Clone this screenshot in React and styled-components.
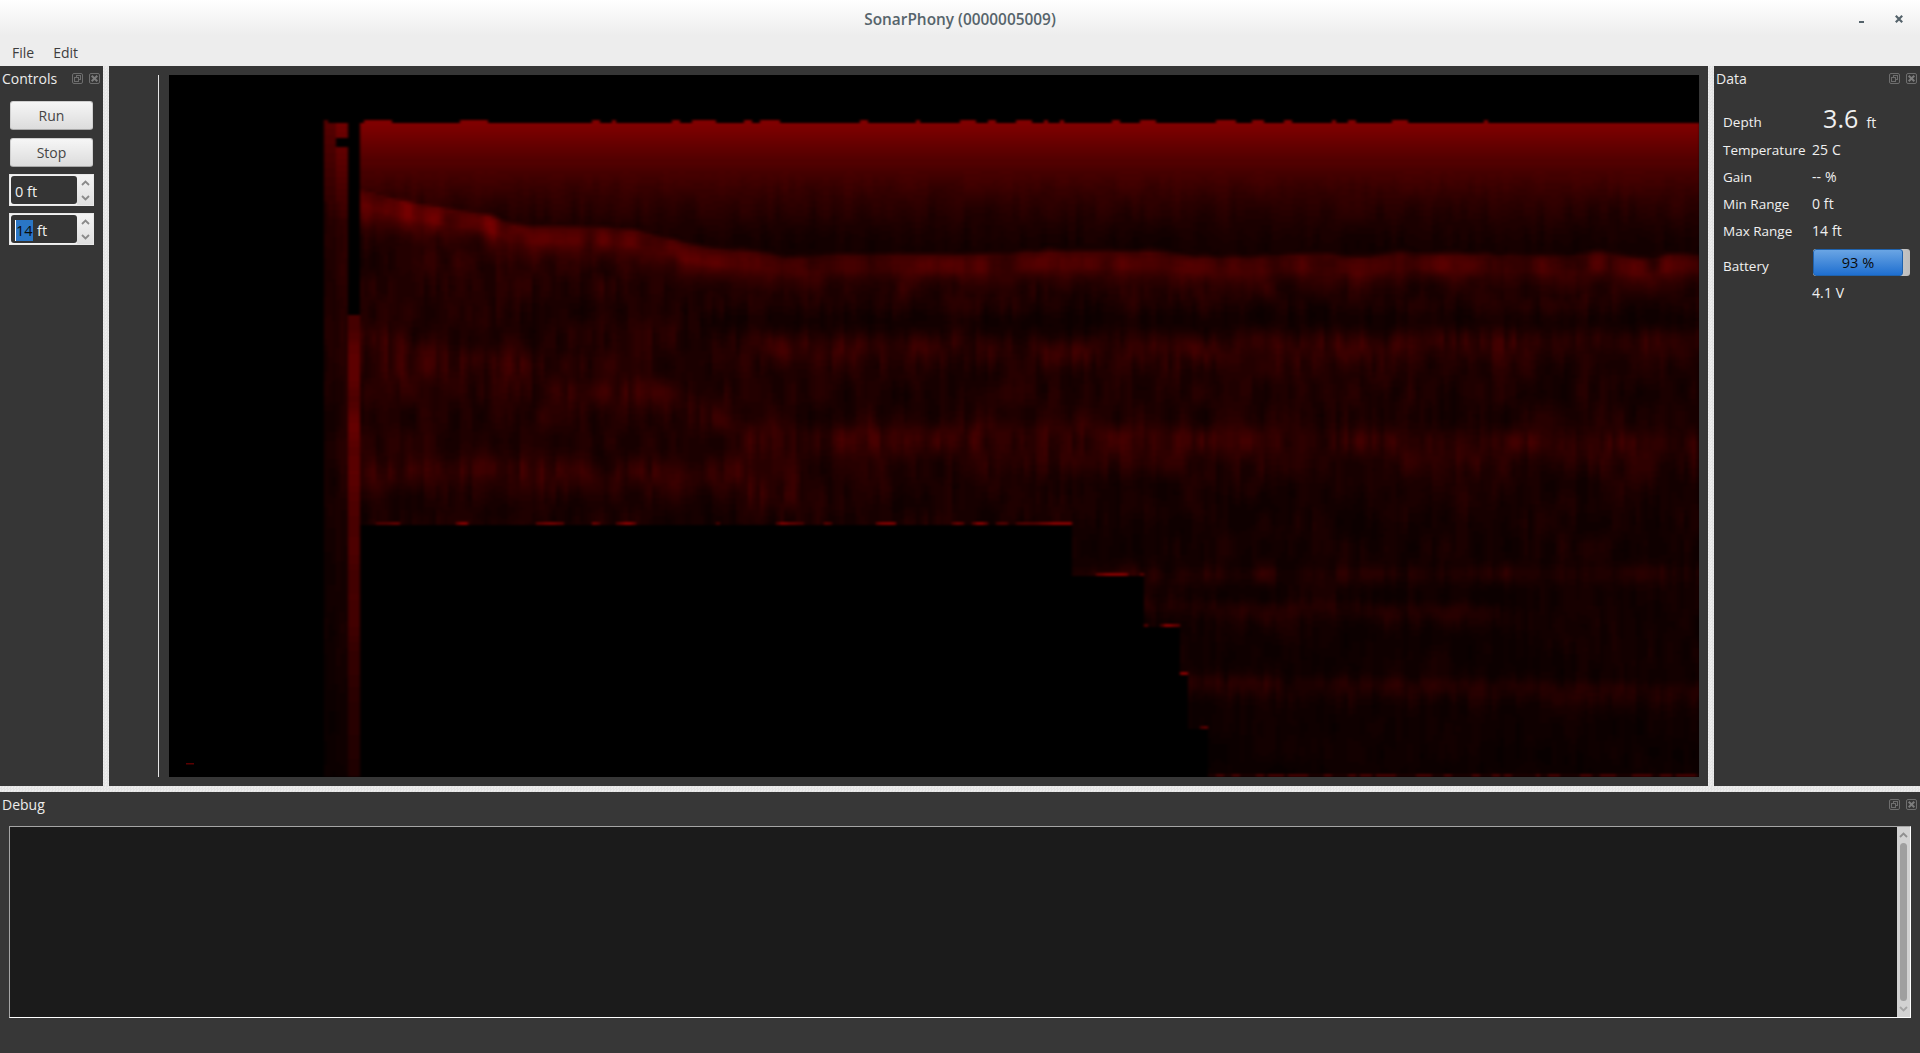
import React, { useMemo } from "react";
import styled, { createGlobalStyle } from "styled-components";

const Global = createGlobalStyle`
  html, body { margin: 0; padding: 0; background: #363636; overflow: hidden; }
  #root { width: 1920px; height: 1053px; }
`;

const FONT = `"Open Sans", "Noto Sans", sans-serif`;
const grip = `
  background-color: #ececec;
  background-image: conic-gradient(#e3e3e3 25%, transparent 0 50%, #e3e3e3 0 75%, transparent 0);
  background-size: 3px 3px;
`;

const Window = styled.div`
  width: 1920px; height: 1053px; display: flex; flex-direction: column;
  font-family: ${FONT}; background: #363636; color: #f0f0f0; overflow: hidden;
`;
const TitleBar = styled.div`
  height: 35px; flex: none; position: relative; display: flex; align-items: center; justify-content: center;
  background: linear-gradient(#ffffff, #ededed);
`;
const Title = styled.div`
  font-size: 15.4px; font-weight: 600; color: #56646b; margin-top: 3px;
`;
const WinControls = styled.div`
  position: absolute; right: 0; top: 0; height: 35px; display: flex; align-items: center;
`;
const MinGlyph = styled.div`
  position: absolute; right: 56px; top: 21px; width: 5px; height: 2px; background: #55636b;
`;
const CloseGlyph = styled.svg`
  position: absolute; right: 17px; top: 15px; width: 8px; height: 8px;
`;
const MenuBar = styled.div`
  height: 31px; flex: none; display: flex; align-items: center; background: #ededed; padding: 4px 0 0 12px; gap: 19px;
  font-size: 14px; color: #3d3d3d; box-sizing: border-box;
`;
const MainRow = styled.div`
  flex: none; height: 720px; display: flex;
`;
const VGrip = styled.div` flex: none; width: 6px; ${grip} `;
const HGrip = styled.div` flex: none; height: 6px; ${grip} `;
const Dock = styled.div`
  flex: none; width: ${p => p.$w}px; background: #363636; display: flex; flex-direction: column; box-sizing: border-box;
`;
const DockHead = styled.div`
  height: 26px; flex: none; box-sizing: border-box; display: flex; align-items: center; padding: 0 3px 1px 2px; gap: 6px;
  font-size: 14px; color: #ececec;
`;
const DockTitle = styled.div` flex: 1; margin-bottom: 1px; `;
const HeadIcon = styled.svg` width: 11px; height: 11px; flex: none; display: block; `;
const ControlsBody = styled.div`
  display: flex; flex-direction: column; padding: 9px 9px 0 9px; gap: 8px;
`;
const PushButton = styled.div`
  height: 29px; margin: 0 1px; box-sizing: border-box; border-radius: 3px; display: flex; align-items: center; justify-content: center;
  background: linear-gradient(#f6f6f6, #dcdcdc); border: 1px solid #cfcfcf; border-bottom-color: #a8a8a8;
  font-size: 14px; color: #454545;
`;
const SpinBox = styled.div`
  height: 32px; width: 85px; margin-top: -1px; box-sizing: border-box; display: flex; background: #f2f2f2; border: 1px solid #e8e8e8;
`;
const SpinInput = styled.div`
  flex: 1; margin: 1px 0 1px 1px; background: #343434; border-radius: 3px; display: flex; align-items: center; padding: 2px 0 0 4px; box-sizing: border-box;
  font-size: 14.5px; color: #f0f0f0;
`;
const Selected = styled.span`
  background: #2a76c6; color: #0a0a0a; border-left: 1px solid #fff; padding: 2px 0; margin-right: 4px; width: 17px; display: inline-block; line-height: 17px;
`;
const SpinButtons = styled.div`
  width: 16px; flex: none; display: flex; flex-direction: column; justify-content: space-around; align-items: center;
  background: linear-gradient(#f4f4f4, #dfdfdf);
`;
const Chevron = styled.svg` width: 9px; height: 6px; display: block; `;
const Center = styled.div`
  flex: 1; min-width: 0; background: #363636; display: flex; padding: 9px 9px 9px 49px; box-sizing: border-box;
`;
const Axis = styled.div` flex: none; width: 1px; background: #e6e6e6; margin-right: 10px; `;
const Plot = styled.div` flex: 1; background: #000; min-width: 0; `;
const PlotSvg = styled.svg` display: block; width: 100%; height: 100%; `;
const DataGrid = styled.div`
  display: grid; grid-template-columns: 89px 1fr; padding: 16px 4px 0 9px; font-size: 13.5px; color: #f0f0f0;
`;
const Label = styled.div`
  height: ${p => p.$h || 27}px; box-sizing: border-box; padding-top: ${p => p.$dy || 0}px; display: flex; align-items: center;
`;
const Value = styled.div`
  height: ${p => p.$h || 27}px; box-sizing: border-box; display: flex; align-items: center; font-size: 14px; letter-spacing: 0.1px;
`;
const DepthValue = styled.span`
  font-size: 25px; margin: 0 8px 7px 11px; line-height: 1;
`;
const Progress = styled.div`
  width: 97px; height: 27px; margin: 0 0 2px 1px; box-sizing: border-box; border-radius: 3px; overflow: hidden;
  background: linear-gradient(90deg, #c4c4c4, #dcdcdc 60%, #bdbdbd); display: flex;
`;
const Chunk = styled.div`
  height: 100%; box-sizing: border-box; border: 1px solid #1f62ad; border-radius: 3px; display: flex; align-items: center; justify-content: center;
  background: linear-gradient(#6aa5e4, #1f6fd0); color: #0a0a0a; font-size: 14.5px;
`;
const Debug = styled.div`
  flex: 1; background: #373737; display: flex; flex-direction: column; min-height: 0;
`;
const DebugBox = styled.div`
  margin: 8px 9px 0 9px; height: 192px; box-sizing: border-box; display: flex; background: #1b1b1b;
  border: 1px solid #fff; border-top-color: #a5a5a5; border-left-color: #a5a5a5;
`;
const DebugText = styled.div` flex: 1; `;
const ScrollBar = styled.div`
  width: 13px; flex: none; background: #d2d2d2; display: flex; flex-direction: column; align-items: center; justify-content: space-between; padding: 5px 0; box-sizing: border-box;
`;
const Thumb = styled.div`
  width: 7px; flex: 1; margin: 5px 0; border-radius: 4px; background: #9f9f9f;
`;

const FloatIcon = () => (
  <HeadIcon viewBox="0 0 11 11" fill="none" stroke="#6e6e6e">
    <rect x=".5" y=".5" width="10" height="10" rx="1.5" />
    <rect x="4.5" y="2.5" width="4" height="4" />
    <rect x="2.5" y="4.5" width="4" height="4" fill="#363636" />
  </HeadIcon>
);
const CloseIcon = () => (
  <HeadIcon viewBox="0 0 11 11" fill="none" stroke="#6e6e6e">
    <rect x=".5" y=".5" width="10" height="10" rx="1.5" />
    <path d="M2.7 2.7l5.6 5.6M8.3 2.7l-5.6 5.6" strokeWidth="2" stroke="#7c7c7c" />
  </HeadIcon>
);
const Up = ({ c = "#8a8a8a" }) => (
  <Chevron viewBox="0 0 9 6" fill="none" stroke={c} strokeWidth="1.8"><path d="M1 5l3.5-3.5L8 5" /></Chevron>
);
const Down = ({ c = "#8a8a8a" }) => (
  <Chevron viewBox="0 0 9 6" fill="none" stroke={c} strokeWidth="1.8"><path d="M1 1l3.5 3.5L8 1" /></Chevron>
);

/* ---- sonar echogram, generated from seeded noise ---- */
function hash(i, j, s) {
  let h = (i * 374761393 + j * 668265263 + s * 2147483) | 0;
  h = Math.imul(h ^ (h >>> 13), 1274126177);
  h = h ^ (h >>> 16);
  return (h >>> 0) / 4294967296;
}
function vnoise(x, y, s) {
  const i = Math.floor(x), j = Math.floor(y);
  let fx = x - i, fy = y - j;
  fx = fx * fx * (3 - 2 * fx); fy = fy * fy * (3 - 2 * fy);
  const a = hash(i, j, s), b = hash(i + 1, j, s), c = hash(i, j + 1, s), d = hash(i + 1, j + 1, s);
  return a + (b - a) * fx + (c - a) * fy + (a - b - c + d) * fx * fy;
}
function curve(pts, x) {
  if (x <= pts[0][0]) return pts[0][1];
  for (let k = 1; k < pts.length; k++) {
    if (x <= pts[k][0]) {
      const [x0, y0] = pts[k - 1], [x1, y1] = pts[k];
      return y0 + (y1 - y0) * (x - x0) / (x1 - x0);
    }
  }
  return pts[pts.length - 1][1];
}
const clamp = (v, a, b) => Math.max(a, Math.min(b, v));
const R1 = [[360, 190], [440, 208], [517, 225], [633, 230], [700, 248], [783, 260], [900, 256], [1100, 255], [1300, 257], [1500, 255], [1699, 258]];
const BANDS = [
  { pts: [[360, 340], [500, 365], [612, 372], [680, 400], [735, 432], [800, 436], [1000, 432], [1300, 440], [1699, 445]], amp: 20, up: 10, down: 22, x0: 360, x1: 1699 },
  { pts: [[784, 345], [1100, 350], [1400, 345], [1699, 340]], amp: 17, up: 9, down: 14, x0: 740, x1: 1699 },
  { pts: [[360, 470], [700, 480], [760, 482]], amp: 24, up: 12, down: 14, x0: 360, x1: 800 },
  { pts: [[1072, 575], [1699, 572]], amp: 11, up: 5, down: 8, x0: 1072, x1: 1699 },
  { pts: [[1143, 607], [1500, 610], [1699, 605]], amp: 15, up: 6, down: 9, x0: 1143, x1: 1500 },
  { pts: [[1186, 682], [1699, 690]], amp: 15, up: 6, down: 11, x0: 1186, x1: 1699 },
];
const STEPS = [[1071, 524], [1143, 575], [1179, 627], [1186, 676], [1209, 728]];

function blackTop(x) {
  for (const [xe, y] of STEPS) if (x < xe) return y;
  return 9999;
}

function sonar(x, y) {
  if (x < 324 || y < 120) return 0;
  const jag = vnoise(x / 9, 3, 5) > 0.7 ? 120 : 123;
  if (y < jag) return 0;
  const streak = 0.6 + 0.8 * vnoise(x / 6, y / 26, 1);
  const blotch = 0.72 + 0.56 * vnoise(x / 30, y / 22, 2);
  if (x < 349) {
    if (x >= 335 && y >= 137 && y < 147) return 0;
    const fall = y < 220 ? 118 - (y - 123) * 0.65 : 50 - (y - 220) * 0.065;
    return clamp(fall * (x < 335 ? 0.72 : 0.95) * (y < 200 ? 1 : 0.65 + 0.55 * vnoise(x / 6, y / 30, 3)), 9, 130);
  }
  if (x < 360) {
    if (y < 315) return 0;
    const f = y < 520 ? 92 - Math.abs(y - 430) * 0.12 : 82 - (y - 520) * 0.2;
    return clamp(f * (0.85 + 0.25 * vnoise(1, y / 25, 4)), 22, 105);
  }
  const bt = blackTop(x);
  if (y >= bt) return 0;
  if (y >= bt - 3) {
    const n = vnoise(x / 11, bt, 6);
    if (n > 0.55) return 70 + 90 * (n - 0.55) * 2.2;
  }
  if (y >= 773 && x >= 1209) {
    return vnoise(x / 6, 9, 7) > 0.42 ? 70 : 26;
  }

  // top gradient, running smoothly down into the dark gap above the ridge
  const t = clamp((y - 122) / 125, 0, 1);
  const texMix = clamp((y - 165) / 50, 0, 1);
  const grad = (108 * Math.pow(1 - t, 1.5) + 20) * (1 + texMix * (0.55 * vnoise(x / 7, y / 30, 9) - 0.27));

  const r1 = curve(R1, x) + 6 * (vnoise(x / 40, 1, 10) - 0.5);
  const d = y - r1;
  const fadeOut = clamp((x - 360) / 400, 0, 1);
  const rAmp = 88 - 30 * fadeOut;
  // a thick, flat-topped echo rather than a thin line
  let prof;
  if (d < 0) prof = Math.exp(d / 6);
  else if (d < 14) prof = 1;
  else prof = Math.exp(-(d - 14) / 20);
  const ridgeTex = 0.55 + 0.75 * vnoise(x / 14, y / 22, 8);

  const depth = clamp((y - 260) / 520, 0, 1);
  let floor = 34 - 18 * depth;
  if (x > 1000) floor *= 1 - 0.25 * depth;
  // darker strip under the ridge on the flat part
  if (x > 700) {
    const g = (y - 320) / 14;
    floor *= 1 - 0.4 * Math.exp(-g * g);
  }
  let bands = 0;
  for (const b of BANDS) {
    if (x < b.x0 || x > b.x1) continue;
    const q = y - curve(b.pts, x);
    bands += b.amp * Math.exp(-(q * q) / (2 * (q < 0 ? b.up * b.up : b.down * b.down)));
  }
  const below = clamp((d + 4) / 10, 0, 1);
  const body = (floor + bands) * streak * blotch;
  const base = grad * (1 - below) + body * below;
  return clamp(Math.max(base, rAmp * prof * ridgeTex + body * 0.45 * below), 0, 135);
}

function buildPaths() {
  const cw = 4, ch = 3;
  const levels = 36;
  const paths = Array.from({ length: levels }, () => []);
  for (let y = 117; y < 777; y += ch) {
    let start = -1, cur = -1;
    for (let x = 320; x <= 1700; x += cw) {
      const v = x >= 1699 ? 0 : sonar(x + 1, y + 1);
      const lv = clamp(Math.round(v / 135 * (levels - 1)), 0, levels - 1);
      if (lv !== cur) {
        if (cur > 0) paths[cur].push(`M${start} ${y}h${x - start}v${ch}h${start - x}z`);
        start = x; cur = lv;
      }
    }
    if (cur > 0) paths[cur].push(`M${start} ${y}h${1700 - start}v${ch}h${start - 1700}z`);
  }
  return paths.map((p, i) => ({ d: p.join(""), r: Math.round(i / (levels - 1) * 135) })).filter(p => p.d);
}

const Sonar = () => {
  const paths = useMemo(buildPaths, []);
  return (
    <PlotSvg viewBox="169 75 1530 702" preserveAspectRatio="none">
      <defs>
        <filter id="soften" filterUnits="userSpaceOnUse" x="169" y="75" width="1530" height="702" colorInterpolationFilters="sRGB">
          <feGaussianBlur stdDeviation="1.5 1" />
        </filter>
      </defs>
      <g filter="url(#soften)" shapeRendering="crispEdges">
        {paths.map(p => <path key={p.r} d={p.d} fill={`rgb(${p.r},0,0)`} />)}
      </g>
      <rect x="186" y="763" width="8" height="1.5" fill="#5a0000" />
    </PlotSvg>
  );
};

export default function App() {
  return (
    <Window>
      <Global />
      <TitleBar>
        <Title>SonarPhony (0000005009)</Title>
        <WinControls>
          <MinGlyph />
          <CloseGlyph viewBox="0 0 8 8" stroke="#55636b" strokeWidth="2.2"><path d="M.8.8l6.4 6.4M7.2.8L.8 7.2" /></CloseGlyph>
        </WinControls>
      </TitleBar>
      <MenuBar><span>File</span><span>Edit</span></MenuBar>
      <MainRow>
        <Dock $w={103}>
          <DockHead>
            <DockTitle>Controls</DockTitle><FloatIcon /><CloseIcon />
          </DockHead>
          <ControlsBody>
            <PushButton>Run</PushButton>
            <PushButton>Stop</PushButton>
            <SpinBox>
              <SpinInput>0 ft</SpinInput>
              <SpinButtons><Up /><Down /></SpinButtons>
            </SpinBox>
            <SpinBox>
              <SpinInput><Selected>14</Selected>ft</SpinInput>
              <SpinButtons><Up /><Down /></SpinButtons>
            </SpinBox>
          </ControlsBody>
        </Dock>
        <VGrip />
        <Center>
          <Axis />
          <Plot><Sonar /></Plot>
        </Center>
        <VGrip />
        <Dock $w={206}>
          <DockHead>
            <DockTitle>Data</DockTitle><FloatIcon /><CloseIcon />
          </DockHead>
          <DataGrid>
            <Label $h={28}>Depth</Label>
            <Value $h={28}><DepthValue>3.6</DepthValue>ft</Value>
            <Label>Temperature</Label><Value>25 C</Value>
            <Label>Gain</Label><Value>-- %</Value>
            <Label>Min Range</Label><Value>0 ft</Value>
            <Label>Max Range</Label><Value>14 ft</Value>
            <Label $h={38} $dy={5}>Battery</Label>
            <Value $h={38}>
              <Progress><Chunk style={{ width: `${90 / 97 * 100}%` }}>93 %</Chunk></Progress>
            </Value>
            <Label $h={20} />
            <Value $h={20}>4.1 V</Value>
          </DataGrid>
        </Dock>
      </MainRow>
      <HGrip />
      <Debug>
        <DockHead>
          <DockTitle>Debug</DockTitle><FloatIcon /><CloseIcon />
        </DockHead>
        <DebugBox>
          <DebugText />
          <ScrollBar><Up c="#8f8f8f" /><Thumb /><Down c="#a5a5a5" /></ScrollBar>
        </DebugBox>
      </Debug>
    </Window>
  );
}
